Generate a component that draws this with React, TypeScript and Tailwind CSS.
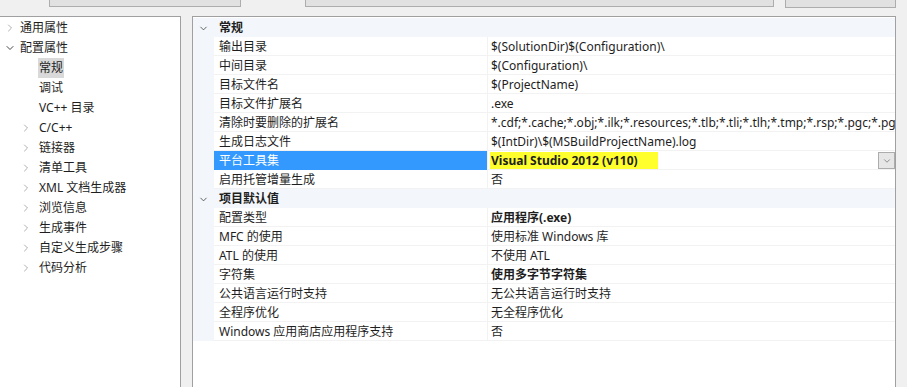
import { ChevronRight, ChevronDown } from 'lucide-react';

/* ---------- data ---------- */

type TreeItem = { label: string; level: 1 | 2; arrow?: 'right' | 'down'; selected?: boolean };

const TREE: TreeItem[] = [
  { label: '通用属性', level: 1, arrow: 'right' },
  { label: '配置属性', level: 1, arrow: 'down' },
  { label: '常规', level: 2, selected: true },
  { label: '调试', level: 2 },
  { label: 'VC++ 目录', level: 2 },
  { label: 'C/C++', level: 2, arrow: 'right' },
  { label: '链接器', level: 2, arrow: 'right' },
  { label: '清单工具', level: 2, arrow: 'right' },
  { label: 'XML 文档生成器', level: 2, arrow: 'right' },
  { label: '浏览信息', level: 2, arrow: 'right' },
  { label: '生成事件', level: 2, arrow: 'right' },
  { label: '自定义生成步骤', level: 2, arrow: 'right' },
  { label: '代码分析', level: 2, arrow: 'right' },
];

type Prop = { name: string; value: string; bold?: boolean; selected?: boolean };
type Section = { title: string; props: Prop[] };

const SECTIONS: Section[] = [
  {
    title: '常规',
    props: [
      { name: '输出目录', value: '$(SolutionDir)$(Configuration)\\' },
      { name: '中间目录', value: '$(Configuration)\\' },
      { name: '目标文件名', value: '$(ProjectName)' },
      { name: '目标文件扩展名', value: '.exe' },
      {
        name: '清除时要删除的扩展名',
        value:
          '*.cdf;*.cache;*.obj;*.ilk;*.resources;*.tlb;*.tli;*.tlh;*.tmp;*.rsp;*.pgc;*.pgd;*.meta;*.tlog;*.manifest;*.res;*.pch;*.exp;*.idb;*.rep;*.xdc;*.pdb',
      },
      { name: '生成日志文件', value: '$(IntDir)\\$(MSBuildProjectName).log' },
      { name: '平台工具集', value: 'Visual Studio 2012 (v110)', bold: true, selected: true },
      { name: '启用托管增量生成', value: '否' },
    ],
  },
  {
    title: '项目默认值',
    props: [
      { name: '配置类型', value: '应用程序(.exe)', bold: true },
      { name: 'MFC 的使用', value: '使用标准 Windows 库' },
      { name: 'ATL 的使用', value: '不使用 ATL' },
      { name: '字符集', value: '使用多字节字符集', bold: true },
      { name: '公共语言运行时支持', value: '无公共语言运行时支持' },
      { name: '全程序优化', value: '无全程序优化' },
      { name: 'Windows 应用商店应用程序支持', value: '否' },
    ],
  },
];

const FONT = "font-['Segoe_UI','Noto_Sans','Noto_Sans_CJK_SC',sans-serif]";

/* ---------- component ---------- */

export default function App() {
  return (
    <div className={`w-[907px] h-[387px] overflow-hidden bg-[#f0f0f0] text-[12px] text-[#1e1e1e] ${FONT}`}>
      {/* ---- cut-off buttons ---- */}
      <div className="flex h-[16px] items-start">
        <div className="ml-[49px] w-[192px] h-[7px] bg-[#e1e1e1] border-x border-b border-[#adadad]" />
        <div className="ml-[64px] w-[469px] h-[7px] bg-[#e1e1e1] border-x border-b border-[#adadad]" />
        <div className="ml-[11px] w-[111px] h-[8px] bg-[#e1e1e1] border-x border-b border-[#adadad]" />
      </div>

      <div className="flex h-[371px]">
        {/* ---- tree ---- */}
        <div className="w-[181px] bg-white border-t border-r border-[#a0a0a0] pt-[1px]">
          {TREE.map((t) => (
            <div key={t.label} className="flex items-center h-[20px]">
              <div className={t.level === 1 ? 'w-[20px] flex justify-center' : 'w-[39px] flex justify-end pr-[7px]'}>
                {t.arrow === 'right' && <ChevronRight size={12} strokeWidth={1.6} className="text-[#9a9a9a]" />}
                {t.arrow === 'down' && <ChevronDown size={12} strokeWidth={1.8} className="text-[#333]" />}
              </div>
              <span className={t.selected ? 'bg-[#d9d9d9] px-[1px] -ml-[1px] leading-[20px]' : 'leading-[20px]'}>
                {t.label}
              </span>
            </div>
          ))}
        </div>

        {/* ---- property grid ---- */}
        <div className="ml-[11px] w-[704px] bg-white border-t border-l border-r border-[#a0a0a0] overflow-hidden pt-[1px]">
          {SECTIONS.map((s) => (
            <div key={s.title}>
              <div className="flex items-center h-[19px] bg-[#f3f7fb] pt-[1px]">
                <div className="w-[21px] flex justify-center">
                  <ChevronDown size={11} strokeWidth={1.8} className="text-[#444]" />
                </div>
                <span className="pl-[5px] font-bold">{s.title}</span>
              </div>
              {s.props.map((p) => (
                <div key={p.name} className="flex h-[19px] bg-[#f3f7fb]">
                  <div
                    className={`w-[273px] ml-[21px] pl-[5px] pt-[1px] flex items-center border-b whitespace-nowrap ${
                      p.selected ? 'bg-[#3399ff] text-white border-[#3399ff]' : 'bg-white border-[#f2f2f2]'
                    }`}
                  >
                    {p.name}
                  </div>
                  <div className="flex-1 min-w-0 flex items-center bg-white border-b border-l border-[#f2f2f2] pl-[3px] pt-[1px] relative overflow-hidden">
                    {p.selected ? (
                      <>
                        <span className="bg-[#ffff2e] font-bold pr-[20px] pl-[1px] -ml-[1px] leading-[18px]">
                          {p.value}
                        </span>
                        <div className="absolute right-0 top-[1px] w-[17px] h-[17px] bg-[#e6e6e6] border border-[#acacac] flex items-center justify-center">
                          <ChevronDown size={10} strokeWidth={1.6} className="text-[#606060]" />
                        </div>
                      </>
                    ) : (
                      <span className={`whitespace-nowrap ${p.bold ? 'font-bold' : ''}`}>{p.value}</span>
                    )}
                  </div>
                </div>
              ))}
            </div>
          ))}
        </div>
      </div>
    </div>
  );
}
